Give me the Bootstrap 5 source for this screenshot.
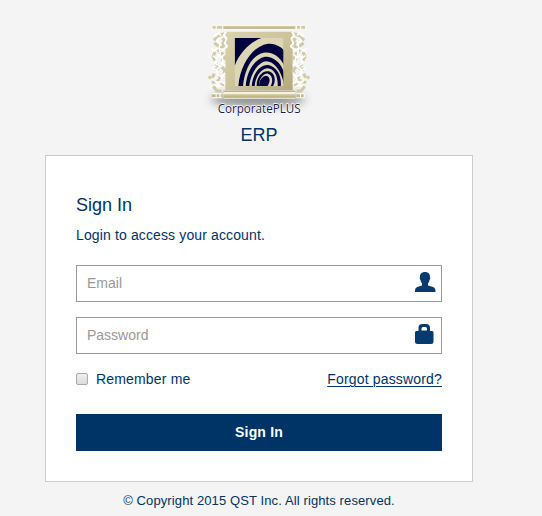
<!DOCTYPE html>
<html lang="en">
<head>
<meta charset="utf-8">
<meta name="viewport" content="width=device-width, initial-scale=1">
<title>CorporatePLUS ERP - Sign In</title>
<link href="https://cdn.jsdelivr.net/npm/bootstrap@5.3.0/dist/css/bootstrap.min.css" rel="stylesheet">
<style>
body{background:#f4f4f4;color:#036;font:14px/20px "Liberation Sans",Arial,sans-serif;overflow:hidden}
.login-wrap{width:428px;margin-left:45px;padding-top:14px}
.brand-logo{width:122px;height:106px;display:block;margin-left:153px}
.brand-title{font-size:18px;line-height:20px;height:20px;margin:5px 0 10px}
.login-card{border:1px solid #ccc;border-radius:0;height:327px;padding:38px 30px 30px;color:#036}
.login-card h1{font-size:18px;line-height:22px;margin:0 0 9px;font-weight:400}
.login-note{letter-spacing:.13px;margin:0 0 20px}
.field-box{height:37px;margin-bottom:15px;border:1px solid #999}
.field-box .form-control{font-size:14px;padding:0 10px;color:#036;border:0;background:none;box-shadow:none}
.field-box .form-control::placeholder{color:#999;opacity:1}
.field-icon{width:22px;height:22px;margin:5px 5px 0 0;flex:none;fill:#073a6f}
.check-box{appearance:none;width:12px;height:12px;margin:0 8px 0 0;border:1px solid #aaa;border-radius:2px;background:linear-gradient(#eee,#dcdcdc)}
.login-options{height:20px;letter-spacing:.17px}
.login-options a{color:#036;text-underline-offset:2px;text-decoration-thickness:1px}
.btn-login{height:37px;margin-top:25px;padding:0;background:#036;color:#fff;font-size:14px;font-weight:700;letter-spacing:.17px}
.btn-login:hover{background:#024;color:#fff}
.login-footer{font-size:13px;line-height:20px;margin-top:9px;letter-spacing:.11px}
</style>
</head>
<body>
<main class="login-wrap">
  <svg class="brand-logo" viewBox="0 0 366 318" role="img" aria-label="CorporatePLUS">
    <defs>
      <linearGradient id="gold" x1="0" y1="0" x2="1" y2="1"><stop offset="0" stop-color="#d9d2b0"/><stop offset=".5" stop-color="#cdc49c"/><stop offset="1" stop-color="#b3a97a"/></linearGradient>
      <linearGradient id="bar" x1="0" y1="0" x2="0" y2="1"><stop offset="0" stop-color="#d9d2af"/><stop offset="1" stop-color="#b3a979"/></linearGradient>
      <filter id="soft" x="-20%" y="-80%" width="140%" height="260%"><feGaussianBlur stdDeviation="12"/></filter>
      <clipPath id="mark-clip"><rect x="110" y="72" width="146" height="144"/></clipPath>
      <g id="lace" fill="none" stroke-linejoin="round">
        <path d="M76 59l-14 4-5 8-13 7m26-5l8 9-9 8m-23-3l11 8 9 6-10 12m-8 1l-6 14 6 12m12-24l11 4 6 12-10 7m7-49l-3 12m-22 47l11 7-5 9-10 1m24-7l9 11-4 11m-28-2l-6 12m19-8l6 11-11 8m-14-1l8 12m12-7l12 3-3 12m-26-4l10 13 14 2m-31-44l-7 5" stroke="#d1c9a0" stroke-width="9"/>
        <path d="M82 54l-8 9 9 10-6 15 8 9-12 11-13-5 4-15-11-9 9-9m-17-5l13-8 8 7m-9 39l-13 8-6-8m23 0l3 18-11 7m3-7l12 9 9-10m-8 9l4 16-9 11-14-7 3-15-12-9m27 24l11 5m-17 3l-10 12-12-7m12 7l4 14 13 5 9-12m-9 12l-4 14 13 8m-13-8l-13 4-7-9m20 5l-10 14-12-6m14 4l17 6" stroke="#fff" stroke-width="5"/>
      </g>
    </defs>
    <ellipse cx="180" cy="256" rx="142" ry="23" fill="#555" opacity=".6" filter="url(#soft)"/>
    <path d="M82 53H284V229H82z" fill="url(#gold)"/>
    <use href="#lace" transform="translate(3 0)"/>
    <use href="#lace" transform="matrix(-1 0 0 1 363 0)"/>
    <path d="M40 30H325V49H40z" fill="#f8f7ef"/>
    <path d="M76 36H292V44H76z" fill="url(#bar)"/>
    <path d="M44 40h28m225 0h24" stroke="#d2c99f" stroke-width="8" stroke-dasharray="9 4 15 3"/>
    <path d="M76 230H292V254H76z" fill="#f5f3e6"/>
    <path d="M76 230H292V233H76z" fill="#a69c70"/>
    <path d="M76 240H292V251H76z" fill="url(#bar)"/>
    <path d="M42 245h31m222 0h25" stroke="#fff" stroke-width="15"/>
    <path d="M42 245h31m222 0h25" stroke="#c2b98b" stroke-width="9" stroke-dasharray="11 3 8 4"/>
    <g clip-path="url(#mark-clip)">
      <path d="M110 72H256V216H110z" fill="#ddd6b4"/>
      <g transform="translate(102 66)" fill="#00003f">
        <path d="M8 6H88C55 18 22 50 8 90z"/>
        <path d="M19 152C24 82 68 23 114 23C136 24 150 35 158 45V91C143 59 118 46 95 50C60 57 37 101 33 152z"/>
        <path d="M41 152C44 101 75 60 106 62C137 66 154 95 158 118V152C148 103 127 77 103 76C75 79 53 121 52 152z"/>
        <path d="M59 152C62 110 85 85 109 87C138 93 150 125 146 152H137C139 120 126 98 107 97C85 98 69 126 68 152z"/>
        <path fill-rule="evenodd" d="M74 152C72 124 91 102 110 106C130 111 133 135 122 152H115C124 136 122 117 108 113C93 111 79 132 81 152z"/>
        <ellipse cx="97" cy="139" rx="14" ry="21" transform="rotate(28 97 139)"/>
      </g>
    </g>
    <text x="59" y="297" textLength="249" lengthAdjust="spacingAndGlyphs" font-family="Open Sans,sans-serif" font-size="39" font-weight="500" fill="#1c1850" stroke="#fff" stroke-width="4" stroke-linejoin="round" paint-order="stroke">CorporatePLUS</text>
  </svg>
  <div class="brand-title text-center">ERP</div>
  <form class="card login-card">
    <h1>Sign In</h1>
    <p class="login-note">Login to access your account.</p>
    <div class="field-box d-flex">
      <input class="form-control" type="email" placeholder="Email" aria-label="Email">
      <svg class="field-icon" viewBox="0 0 22 22" aria-hidden="true"><path d="M11 1C7.600 1 5.700 3.100 6 6.300c-.5.4-.2 2.100.5 2.700.3 1.700.9 2.700 1.500 3.300v2.100L3.300 16C1.300 16.800 1 18 1 21h20.500c0-3-.5-4.200-2.400-5L14 14.400v-2.100c.7-.6 1.300-1.600 1.500-3.300.8-.6 1-2.300.5-2.700C16.200 3.100 14.400 1 11 1z"/></svg>
    </div>
    <div class="field-box d-flex">
      <input class="form-control" type="password" placeholder="Password" aria-label="Password">
      <svg class="field-icon" viewBox="0 0 22 22" aria-hidden="true"><path fill-rule="evenodd" d="M4.500 8V5q0-4 4-4h3.500q4 0 4 4v3h2q1.500 0 1.500 1.500v9q0 2.500-2.500 2.500H3.500Q1 21 1 18.500v-9Q1 8 2.500 8zM7.500 7.500h5.500V5.500Q13 4 11.500 4H9Q7.500 4 7.500 5.500z"/></svg>
    </div>
    <div class="login-options d-flex justify-content-between align-items-center">
      <label class="d-flex align-items-center"><input class="check-box" type="checkbox">Remember me</label>
      <a href="#">Forgot password?</a>
    </div>
    <button class="btn btn-login rounded-0 border-0 w-100" type="button">Sign In</button>
  </form>
  <footer class="login-footer text-center">© Copyright 2015 QST Inc. All rights reserved.</footer>
</main>
<script src="https://cdn.jsdelivr.net/npm/bootstrap@5.3.0/dist/js/bootstrap.bundle.min.js"></script>
</body>
</html>
